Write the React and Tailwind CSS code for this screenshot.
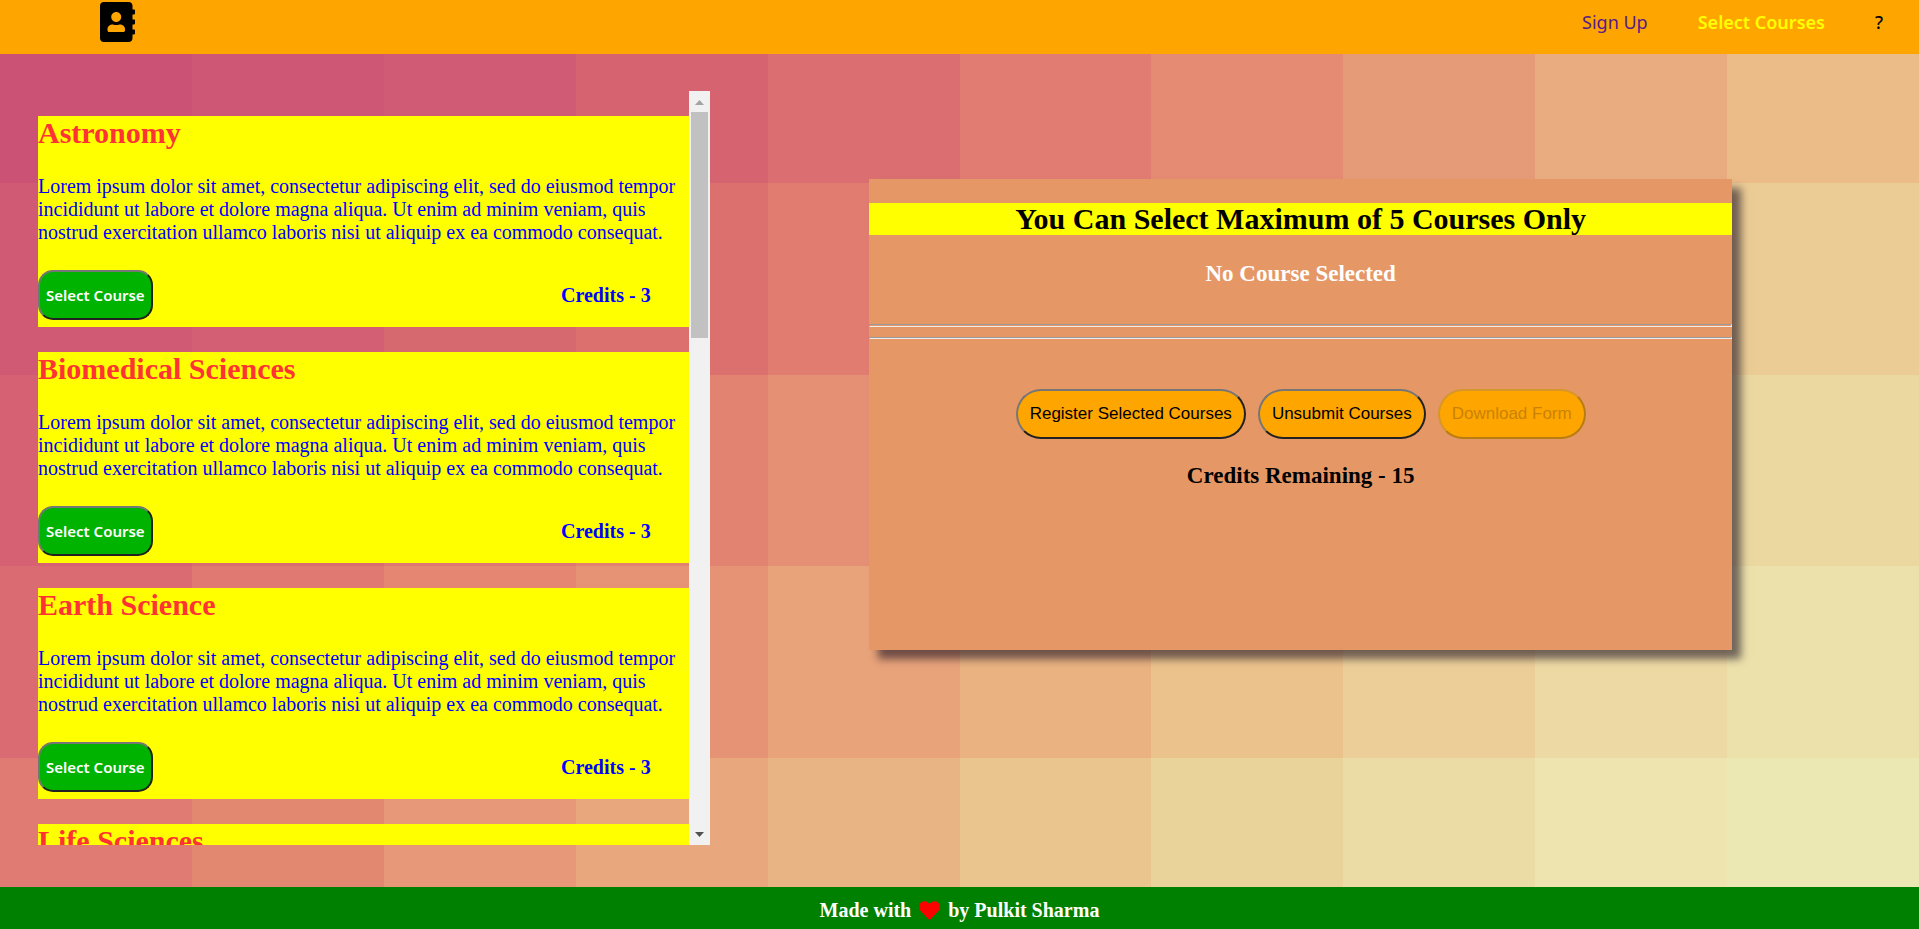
import { FaAddressBook, FaHeart } from "react-icons/fa";

const TILES = [
  ["#cb5275", "#cd5774", "#d05b74", "#d66470", "#da6e70", "#e17c72", "#e58b73", "#e69b78", "#e8ac80", "#ebbc88"],
  ["#d05a73", "#d25f73", "#d66870", "#db706f", "#e17c71", "#e58b73", "#e69b78", "#e8ab7e", "#eabb86", "#ebcc95"],
  ["#d56172", "#d96b71", "#de7771", "#e28372", "#e58f75", "#e79f79", "#e9ae80", "#eabd89", "#ebcb95", "#ead8a0"],
  ["#db6b72", "#e07971", "#e48672", "#e69375", "#e8a37a", "#eab281", "#ebc28b", "#ebce98", "#edd9a3", "#ece1ab"],
  ["#e07b73", "#e38870", "#e79878", "#e9a77d", "#e8b483", "#eac58d", "#ead29b", "#ebdca5", "#eee4af", "#ebe8b3"],
];

const COURSES = [
  { name: "Astronomy", credits: 3 },
  { name: "Biomedical Sciences", credits: 3 },
  { name: "Earth Science", credits: 3 },
  { name: "Life Sciences", credits: 3 },
];

const DESCRIPTION =
  "Lorem ipsum dolor sit amet, consectetur adipiscing elit, sed do eiusmod tempor incididunt ut labore et dolore magna aliqua. Ut enim ad minim veniam, quis nostrud exercitation ullamco laboris nisi ut aliquip ex ea commodo consequat.";

function TiledBackground() {
  return (
    <svg
      aria-hidden="true"
      className="absolute inset-0 -z-10 h-full w-full"
      viewBox="0 0 1920 960"
      preserveAspectRatio="xMidYMid slice"
      shapeRendering="crispEdges"
    >
      {TILES.map((row, r) =>
        row.map((fill, c) => (
          <rect key={`${r}-${c}`} x={c * 192} y={r * 192} width="192" height="192" fill={fill} />
        ))
      )}
    </svg>
  );
}

function NavBar() {
  return (
    <header className="flex h-[54px] shrink-0 items-start justify-between bg-[#ffa500] pr-9 pl-[100px]">
      <a href="#home" aria-label="Home" className="pt-0.5 text-black">
        <FaAddressBook className="h-10 w-[35px]" />
      </a>
      <nav className="flex gap-[50px] pt-2.5 font-['Noto_Sans',sans-serif] text-[18px] leading-6">
        <a href="#signup" className="text-[#551a8b]">Sign Up</a>
        <a href="#courses" className="font-semibold text-[#ffff00]">Select Courses</a>
        <a href="#help" className="font-medium text-black">?</a>
      </nav>
    </header>
  );
}

function CourseCard({ name, credits }) {
  return (
    <article className="bg-[#ffff00] pb-[7px] text-[#0000ff]">
      <h2 className="text-[30px] leading-[34px] font-bold text-[#ff3333]">{name}</h2>
      <p className="mt-[25px] text-[20px] leading-[23px]">{DESCRIPTION}</p>
      <div className="mt-[26px] flex items-center justify-between pr-[38px]">
        <button
          type="button"
          className="h-[50px] rounded-[15px] border-2 border-t-[#767676] border-r-[#212121] border-b-[#212121] border-l-[#767676] bg-[#00b300] px-1.5 font-['Noto_Sans',sans-serif] text-[15px] font-semibold text-white"
        >
          Select Course
        </button>
        <h4 className="text-[20px] leading-[23px] font-bold">Credits - {credits}</h4>
      </div>
    </article>
  );
}

function ScrollTrack() {
  return (
    <div aria-hidden="true" className="flex w-[21px] shrink-0 flex-col items-center bg-[#f1f1f1]">
      <div className="flex h-[21px] items-center pt-0.5">
        <svg width="9" height="5" viewBox="0 0 9 5" fill="#a3a3a3"><path d="M4.5 0 9 5H0z" /></svg>
      </div>
      <div className="h-[30%] w-[17px] bg-[#c1c1c1]" />
      <div className="mt-auto flex h-[21px] items-center">
        <svg width="9" height="5" viewBox="0 0 9 5" fill="#505050"><path d="M0 0H9L4.5 5z" /></svg>
      </div>
    </div>
  );
}

function CourseList() {
  return (
    <section aria-label="Courses" className="flex w-[35vw] shrink-0">
      <div className="flex min-w-0 flex-1 flex-col gap-[25px] overflow-y-auto pt-[25px] [scrollbar-width:none]">
        {COURSES.map((course) => (
          <CourseCard key={course.name} {...course} />
        ))}
      </div>
      <ScrollTrack />
    </section>
  );
}

const PILL = "h-[50px] rounded-full border-2 bg-[#ffa500] px-3 font-['Liberation_Sans',Arial,sans-serif] text-[17px]";
const PILL_ACTIVE = "border-t-[#767676] border-r-[#212121] border-b-[#212121] border-l-[#767676] text-black";
const PILL_DISABLED = "border-t-[#d6962a] border-r-[#b97c10] border-b-[#b97c10] border-l-[#d6962a] text-[#c98204]";
const RULE = "w-full border border-t-[#9a9a9a] border-r-[#eeeeee] border-b-[#eeeeee] border-l-[#9a9a9a]";

function SelectionPanel() {
  return (
    <section className="mt-[88px] ml-[8.3vw] w-[45vw] shrink-0 self-start bg-[#e59866] pt-6 pb-[161px] text-center shadow-[9px_9px_8px_rgba(30,20,35,0.6)]">
      <h2 className="bg-[#ffff00] text-[30px] leading-8 font-bold text-black">
        You Can Select Maximum of 5 Courses Only
      </h2>
      <h3 className="mt-[25px] text-[23px] leading-[27px] font-bold text-white">No Course Selected</h3>
      <hr className={`mt-[37px] h-[3px] ${RULE}`} />
      <hr className={`mt-[10px] h-[2px] ${RULE}`} />
      <div className="mt-[50px] flex justify-center gap-3">
        <button type="button" className={`${PILL} ${PILL_ACTIVE}`}>Register Selected Courses</button>
        <button type="button" className={`${PILL} ${PILL_ACTIVE}`}>Unsubmit Courses</button>
        <button type="button" disabled className={`${PILL} ${PILL_DISABLED}`}>Download Form</button>
      </div>
      <h3 className="mt-[23px] text-[23px] leading-[27px] font-bold text-black">Credits Remaining - 15</h3>
    </section>
  );
}

export default function App() {
  return (
    <div className="flex h-screen flex-col font-['Liberation_Serif','Times_New_Roman',serif]">
      <NavBar />
      <main className="relative isolate flex min-h-0 flex-1 overflow-hidden px-[38px] pt-[37px] pb-[42px]">
        <TiledBackground />
        <CourseList />
        <SelectionPanel />
      </main>
      <footer className="flex h-[42px] shrink-0 items-center justify-center gap-2 bg-[#008000] pt-1 text-[20px] font-bold text-white">
        <span>Made with</span>
        <FaHeart className="h-[21px] w-[21px] text-[#ff0000]" role="img" aria-label="love" />
        <span>by Pulkit Sharma</span>
      </footer>
    </div>
  );
}
